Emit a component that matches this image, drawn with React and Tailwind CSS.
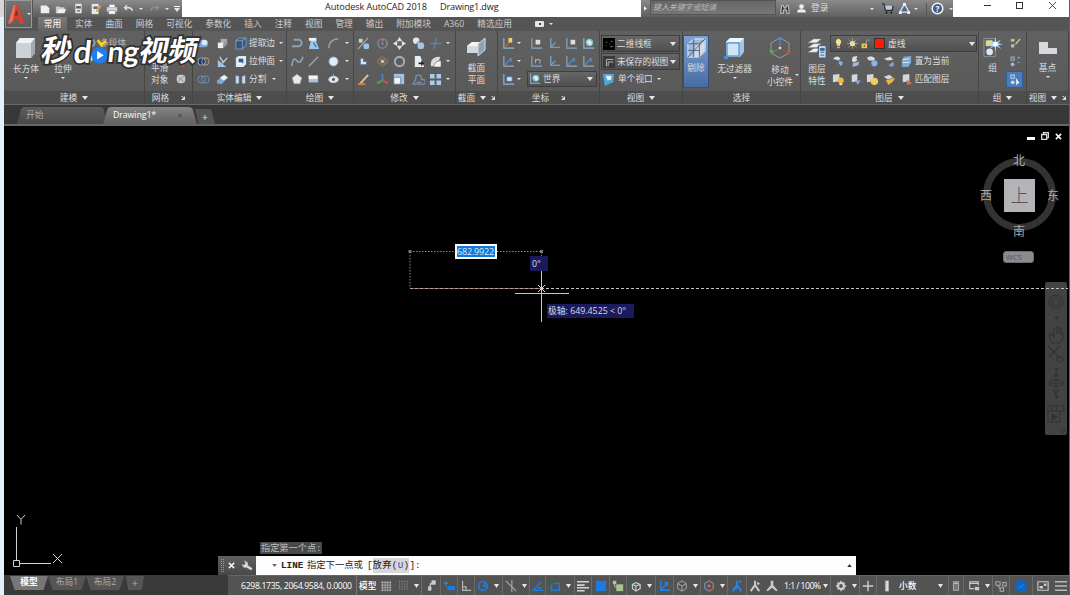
import React from "react";
import clsx from "clsx";

const B = "#8fb6dd"; // light blue used all over the ribbon glyphs

const glyphs = {
  new: <path d="M2 3h7l3 3v6H2z" fill="#eee" />,
  open: <><path d="M1 4h4l1 1h5v2H4l-2 5H1z" fill="#c9cdd2" /><path d="M4 7h9l-2 5H2z" fill="#eef1f4" /></>,
  save: <><path d="M3 1h8v12H3z" fill="#e8e8e8" /><path d="M4 4h6v3H4z" fill="#45607c" /><path d="M5 9h4v2H5z" fill="#777" /></>,
  saveAs: <><path d="M2 1h8v12H2z" fill="#e8e8e8" /><path d="M4 4h5v3H4z" fill="#55708c" /><path d="M7 9l5-7 1 2-5 7z" fill="#e5a23c" /></>,
  print: <><path d="M4 2h6v3H4z" fill="#fff" /><path d="M1 5h12v5H1z" fill="#d5d5d5" /><path d="M3 9h8v4H3z" fill="#fff" stroke="#777" strokeWidth=".7" /></>,
  undo: <path d="M5 3L2 6l3 3M2 6h6q3 0 4 4" fill="none" stroke="#e2e2e2" strokeWidth="1.8" />,
  redo: <path d="M9 3l3 3-3 3M12 6H6Q3 6 2 10" fill="none" stroke="#929292" strokeWidth="1.6" />,
  binoc: <path d="M2 12l1-9h2l1 3h2l1-3h2l1 9H9V8H5v4z" fill="#333" stroke="#eee" strokeWidth=".9" />,
  user: <><circle cx="7" cy="4.5" r="3" fill="#eee" /><path d="M1.500 12q0-4 4-4h3q4 0 4 4z" fill="#eee" /></>,
  cart: <><path d="M3 4h10l-1 5H5z" fill="#c3cbd6" /><path d="M1 2h2l2 7h7l1-5" fill="none" stroke="#26303c" strokeWidth="1.3" /><circle cx="6" cy="11.500" r="1.200" fill="#222" /><circle cx="11" cy="11.500" r="1.200" fill="#222" /></>,
  a360: <><path d="M7 2l5 9H2z" fill="#4f6c8e" stroke="#dfe8f3" strokeWidth="1.300" /><path d="M5.500 1h3v3h-3zM1 10h3v3H1zM10 10h3v3h-3z" fill="#eef3f8" /></>,
  help: <><circle cx="7" cy="7" r="5.700" fill="#3b5d8c" stroke="#f3f6fa" strokeWidth="1.600" /><text x="7" y="10.300" textAnchor="middle" fontSize="9" fontWeight="700" fill="#fff">?</text></>,
  union: <><path d="M1 3h7a4 4 0 010 8H1z" fill="#7da7d8" /><circle cx="8" cy="6" r="3" fill="#dbe9f8" /></>,
  subtract: <><circle cx="5" cy="7" r="4" fill="#23395a" stroke={B} /><circle cx="9" cy="7" r="4" fill="none" stroke="#b9a58b" /></>,
  intersect: <><circle cx="5" cy="7" r="4" fill="none" stroke="#6f93bd" /><circle cx="9" cy="7" r="4" fill="none" stroke="#6f93bd" /></>,
  boxes: <><path d="M5 2h7v6H5z" fill="#a9adb1" /><path d="M2 6h6v6H2z" fill="#eee" /><path d="M8 6l3-2v5l-3 3z" fill="#999" /></>,
  slice: <><path d="M2 5l9 8H2z" fill="#a4c3e6" /><path d="M4 2l4 6M12 3L7 9" stroke="#d7d7d7" strokeWidth="1.200" /></>,
  thicken: <><path d="M1 8l6-4 5 2-6 6-5-1z" fill="#7fa6d4" /><path d="M4 5l5-3 4 3-5 3z" fill="#e9eef3" /></>,
  cubeEdge: <path d="M2 4l4-3h7v8l-4 4H2zM2 4h7l4-3M9 4v9" fill="#3d5574" stroke="#7298c6" strokeWidth="1.100" />,
  pullFace: <><path d="M2 3l3-2h8v9l-3 3H2z" fill="#dfe9f5" /><path d="M5 4h5v5H5z" fill="#315b8f" /><path d="M4 8h5v2H4z" fill="#fff" /></>,
  split: <path d="M1 2l4 1v9H1zM13 2L9 3v9h4z" fill="#c9dcf1" stroke="#6e9aca" strokeWidth=".6" />,
  sphereMesh: <><rect x="2" y="2" width="10" height="10" rx="4" fill="#c9c9c9" /><path d="M3 10l8-7M4 5l6 5" stroke="#888" /></>,
  pline: <path d="M3 3h5a3.500 3.500 0 010 7H1" fill="none" stroke="#8ba1b8" strokeWidth="2" />,
  hatch: <><path d="M3 1h7v4l3 8H2l2-8z" fill="#9cc6ee" /><path d="M2 1h8v3H2z" fill="#eef4fa" /><path d="M7 6l3 5" stroke="#3b79bd" strokeWidth="1.500" /></>,
  arc: <path d="M2 12Q2 3 12 2" fill="none" stroke="#91a4b8" strokeWidth="1.600" />,
  spline: <path d="M1 12Q2 1 6 6t7-4" fill="none" stroke="#93a9c0" strokeWidth="1.600" />,
  line: <path d="M2 12L12 2" stroke="#93a9c0" strokeWidth="1.500" />,
  circle: <circle cx="7" cy="7" r="4.800" fill="#e4edf7" stroke={B} />,
  polygon: <path d="M7 1.500l5.500 4-2 7h-7l-2-7z" fill="#e6eaee" stroke="#9da6b0" />,
  rect: <><path d="M2 3h11v8H2z" fill="#a9c3e0" /><path d="M2 3h10v4H2z" fill="#f0f4f8" /></>,
  ellipse: <><ellipse cx="7" cy="7" rx="5.500" ry="3.800" fill="#dce5ee" /><circle cx="7" cy="7" r="1.600" fill="#555" /><path d="M7 1v3" stroke={B} /></>,
  move: <><path d="M1 13L12 1" stroke="#aaa" strokeWidth="1.300" /><path d="M2 2h4v4H2z" fill="#ccd2d8" /><rect x="7" y="7" width="6" height="6" rx="2" fill="#9dc3ec" /></>,
  rotate: <><circle cx="7" cy="7" r="5" fill="none" stroke="#828b95" strokeWidth="1.500" /><path d="M7 2v3M11 6l2 2" stroke="#c96b5a" strokeWidth="1.700" /><circle cx="7" cy="7" r="1" fill="#79a1d0" /></>,
  pan4: <path d="M7 0l3 4.500H4zM7 14l3-4.500H4zM0 7l4.500-3v6zM14 7L9.500 4v6z" fill="#dce2e8" />,
  copy: <><circle cx="4.500" cy="4" r="3.500" fill="#e2e6ea" /><rect x="6" y="6" width="7" height="7" rx="2.500" fill="#9fc5ec" /><path d="M4 8l4-4" stroke="#777" /></>,
  trim: <path d="M1 7h12M8 1L5 13" stroke="#66809b" strokeWidth="1.600" />,
  stretch: <><path d="M3 3v8h8V7H7V3z" fill="#d5e2f0" stroke="#4f6f96" /></>,
  rotate3d: <><ellipse cx="7" cy="7" rx="5.500" ry="3" fill="none" stroke="#b35b4e" strokeWidth="1.500" /><ellipse cx="7" cy="7" rx="2.500" ry="5.500" fill="none" stroke="#6a8a6c" strokeWidth="1" /><circle cx="7" cy="7" r="1.600" fill="#ddd" /></>,
  ring: <circle cx="7" cy="7" r="5" fill="none" stroke="#a3acb6" strokeWidth="2.200" />,
  mirror: <><path d="M3 1h6l4 12H3z" fill="#e6edf4" /><path d="M7 8h3v-2l3 3-3 3v-2H7z" fill="#222" /></>,
  fillet: <><path d="M2 12V8q1-6 10-6l-1 4q-4 1-4 6z" fill="#d9dde1" /><path d="M5 13q1-7 8-7v7z" fill="#f1f2f3" stroke="#555" strokeWidth=".6" /></>,
  erase: <><path d="M3 12l9-10" stroke="#ddbf93" strokeWidth="2.200" /><path d="M1 12h8" stroke="#d58036" strokeWidth="2" /></>,
  gizmo: <><path d="M7 8V1" stroke="#4b81c4" strokeWidth="2" /><path d="M7 8l-6 3" stroke="#4d9e58" strokeWidth="2.300" /><path d="M7 8l6 3" stroke="#bf5347" strokeWidth="2.300" /></>,
  scale: <><path d="M1 1h12v12H1z" fill="#9ec2e9" /><path d="M1 5h8v8H1z" fill="#f1f5f8" stroke="#5b738c" strokeWidth=".9" /></>,
  offset: <path d="M1 12h11a2 2 0 000-5h-2V5a3 3 0 00-6 0v2zM5 10h5" fill="none" stroke="#7791ad" strokeWidth="1.400" />,
  array: <path d="M1 1h5v5H1zM8 1h5v5H8zM1 8h5v5H1zM8 8h5v5H8z" fill="#a6caf0" />,
  ucs: <path d="M3 1v10h10M3 11l5-5" fill="none" stroke="#86a8cd" strokeWidth="1.200" />,
  ucsGold: <><path d="M2 1v11h11" fill="none" stroke="#8fb6dd" strokeWidth="1.200" /><path d="M4 10l5-6" stroke="#d6653a" strokeWidth="1.300" /><path d="M7 1h4v5H7z" fill="#f6d060" /></>,
  ucsBox: <><path d="M2 1v11h11" fill="none" stroke="#86a8cd" strokeWidth="1.200" /><path d="M6 3h5v5H6z" fill="#ddd" /></>,
  ucsBack: <><path d="M2 1v11h11" fill="none" stroke="#86a8cd" strokeWidth="1.200" /><path d="M6 9V5h4q2 1 0 4" fill="none" stroke="#aaa" strokeWidth="1.200" /></>,
  ucsBlue: <><path d="M2 1v11h11" fill="none" stroke="#9ab" strokeWidth="1.200" /><path d="M3 11l7-8M10 3v4" fill="none" stroke="#5286c4" strokeWidth="1.700" /></>,
  ucsWorld: <><path d="M2 1v11h11" fill="none" stroke="#8fb6dd" strokeWidth="1.200" /><circle cx="8" cy="6" r="4" fill="#7cc3cf" /><path d="M5 5q3-3 5 0t-2 4" fill="#d9eef1" /></>,
  ucsView: <><path d="M2 1v11h11" fill="none" stroke="#8fb6dd" strokeWidth="1.200" /><path d="M5 4h6v5H5z" fill="#cfe2f8" stroke="#3f72b0" /></>,
  visual: <><path d="M0 0h14v14H0z" fill="#000" /><path d="M3 5h2M9 4h2M3 9h1M8 10h4M7 7h1" stroke="#777" /></>,
  named: <><path d="M0 0h14v14H0z" fill="#3a3a3a" /><path d="M4 12V4h8M6 7h6M6 7v5" fill="none" stroke="#bbb" strokeWidth="1.100" /></>,
  viewport: <><path d="M1 1h12l-1 9-9 4z" fill="#4fa6d8" /><path d="M4 3h6v4l-4 1z" fill="#dff1fa" /></>,
  bulb: <><path d="M7 1a4 4 0 00-2 7v2h4V8a4 4 0 00-2-7" fill="#f6e391" /><path d="M5 11h4v2H5z" fill="#aaa" /></>,
  sun: <><circle cx="7" cy="7" r="3.300" fill="#f8edc0" /><path d="M7 0v14M0 7h14M2 2l10 10M12 2L2 12" stroke="#d8c890" strokeWidth=".7" /></>,
  unlock: <><path d="M2 7h7v6H2z" fill="#efc64d" /><path d="M8 7V3q3-2 4 1" fill="none" stroke="#999" strokeWidth="1.200" /><circle cx="5.500" cy="10" r="1" fill="#444" /></>,
  lay1: <><path d="M1 4q5-5 8 0l-2 2z" fill="#d7dce1" /><path d="M8 6l4 2-2 4-3-3z" fill="#7fb0e6" /></>,
  lay2: <><path d="M4 2l5-1-1 3 1 2-4 2-2-2z" fill="#d7dce1" /><path d="M4 9l7-2-1 4-6 2z" fill="#9eb9d6" /></>,
  lay3: <><path d="M1 3q5-4 9 1L8 6H3z" fill="#d7dce1" /><circle cx="9" cy="9" r="3.300" fill="#88b5e7" /></>,
  lay4: <><path d="M1 4l7-2 3 3-6 1z" fill="#d7dce1" /><path d="M6 11l5-4 1 4-3 2z" fill="#7da2cc" /></>,
  lay5: <><path d="M4 2l8-1v7l-3 5H2V6z" fill="#7ea7d5" /><path d="M3 5l7-1M3 8h7" stroke="#e8f0f8" /></>,
  layBulb: <><path d="M1 2l7-1v8l-7 1z" fill="#d4d8dc" /><circle cx="9.500" cy="8" r="3.200" fill="#f3b44a" /><path d="M8 11h3v2H8z" fill="#eee" /></>,
  layBlue: <><path d="M3 2l6-1v8l-6 1z" fill="#d4d8dc" /><path d="M7 8h6l-4 5z" fill="#7da9dc" /></>,
  laySun: <><path d="M1 2l7-1v8l-7 1z" fill="#d4d8dc" /><circle cx="9" cy="9" r="4" fill="#f2cf5b" /></>,
  layLock: <><path d="M1 4l6-2 4 3-6 2z" fill="#d4d8dc" /><path d="M3 8l10-3-2 4-5 4z" fill="#e8b545" /></>,
  layMatch: <><path d="M3 2l7-1v8l-7 1z" fill="#d4d8dc" /><path d="M7 7l6 4-5 2z" fill="#e0723d" /></>,
  grpEdit: <><path d="M3 2h4v3H3z" fill="#c9bc75" /><circle cx="5" cy="9.500" r="2" fill="#bbb" /><path d="M8 8l5-6" stroke="#dccb7d" strokeWidth="1.500" /></>,
  grpAdd: <><path d="M3 2h4v4H3z" fill="#6d7f92" stroke="#a5b3c0" strokeWidth=".8" /><circle cx="5" cy="10" r="2" fill="#a9b6c4" /><path d="M10 3h3M10 8h3M11.500 1.500v3" stroke="#8c9dae" /></>,
  grpSel: <><path d="M3 2h4v4H3z" fill="#6b92c4" stroke="#c8dcf4" strokeWidth=".8" /><circle cx="5" cy="10" r="2" fill="#c7dcf4" /><path d="M9 6l3 5-2 0-1 2z" fill="#fff" stroke="#e8f1fb" strokeWidth=".6" /></>,

  // status bar
  sGrid: <path d="M3 1v12M6 1v12M9 1v12M12 1v12M1 3h12M1 6h12M1 9h12M1 12h12" stroke="#b5b5b5" strokeWidth=".9" />,
  sSnap: <path d="M3 1v12M6 1v12M9 1v12M12 1v12" stroke="#8a8a8a" strokeWidth="1.200" strokeDasharray="1.500 1.500" />,
  sInfer: <path d="M8 1h4v4H8zM8 4H6v5M4 8h3v4H4z" fill="#ccc" stroke="#ccc" />,
  sDyn: <><path d="M1 4h5M3.500 1v6" stroke="#2a86e0" strokeWidth="1.400" /><rect x="5" y="7" width="9" height="5" rx="1" fill="#1d7be0" /></>,
  sOrtho: <path d="M3 1v11h10M3 8h4v4" fill="none" stroke="#b4b4b4" strokeWidth="1.400" />,
  sPolar: <><circle cx="7" cy="7" r="5" fill="none" stroke="#1d7be0" strokeWidth="2" /><path d="M7 7h6M7 7l4-5" stroke="#1d7be0" strokeWidth="1.500" /></>,
  sIso: <path d="M1 1l12 12M8 0v14" stroke="#aaa" strokeWidth="1.300" />,
  sTrack: <path d="M1 12L11 2M1 12h12M7 9h4" fill="none" stroke="#1d7be0" strokeWidth="1.800" />,
  sOsnap: <><path d="M3 4h9v8H3z" fill="none" stroke="#1d7be0" strokeWidth="1.800" /><path d="M1 1h4v4H1z" fill="#237536" /></>,
  sWeight: <path d="M0 2h14M0 6h9M0 9h14M0 12.500h9" stroke="#d5d5d5" strokeWidth="1.800" />,
  sTrans: <path d="M1 1h12v12H1z" fill="#1d7be0" />,
  sCycle: <><path d="M5 5h8v8H5z" fill="#a7c48c" /><path d="M1 1h4v4H1z" fill="#bbb" /><path d="M3 5v3h3" fill="none" stroke="#bbb" /></>,
  s3d: <><path d="M4 5l4-2 5 2v5l-5 3-4-3zM4 5l4 2 5-2M8 7v6" fill="none" stroke="#ccc" strokeWidth="1.400" /><path d="M0 1h4v4H0z" fill="#237536" /></>,
  sDucs: <path d="M2 1v11h11M3 11l7-8M10 3v4M6 3h4" fill="none" stroke="#2384e8" strokeWidth="1.600" />,
  sCube: <path d="M2 4l5-3 5 3v6l-5 3-5-3zM2 4l5 3 5-3M7 7v6" fill="none" stroke="#aaa" strokeWidth="1.100" />,
  sGizmo: <><path d="M7 1l5 3v6l-5 3-5-3V4z" fill="none" stroke="#aaa" /><path d="M12 5v5l-4 3" fill="none" stroke="#c55f4c" strokeWidth="1.200" /><path d="M2 5v5l4 3" fill="none" stroke="#4e88cc" /><circle cx="7" cy="7" r="1.700" fill="#d66" /></>,
  sAnnoB: <path d="M7 1v5l-5 7M7 6l5 7M3 10h4M9 2h3" fill="none" stroke="#2384e8" strokeWidth="2.300" />,
  sAnno: <><path d="M7 1v5l-5 7M7 6l5 7" fill="none" stroke="#ccc" strokeWidth="2.200" /><path d="M9 2l4 2-3 2z" fill="#ccc" /></>,
  sAnnoS: <path d="M5.500 1h3v5l5 6-1.500 1-5-4-5 4L.5 12l5-6z" fill="#ccc" />,
  sGear: <><circle cx="7" cy="7" r="3.400" fill="none" stroke="#d5d5d5" strokeWidth="2.400" /><path d="M7 1v2M7 11v2M1 7h2M11 7h2M3 3l1 1M10 10l1 1M11 3l-1 1M4 10l-1 1" stroke="#d5d5d5" strokeWidth="1.600" /></>,
  sPlus: <path d="M7 1v12M1 7h12" stroke="#d0d0d0" strokeWidth="1.600" />,
  sUnit: <path d="M5 1h4v12H5zM5 4h2M5 7h2M5 10h2" fill="#ddd" stroke="#999" strokeWidth=".5" />,
  sCalc: <><path d="M4 2h6v10H4z" fill="#777" stroke="#aaa" strokeWidth="1.200" /><path d="M5 4h4" stroke="#ddd" /></>,
  sLock: <><path d="M12 6V2H2v8h5M2 4h10" fill="none" stroke="#ccc" strokeWidth="1.300" /><path d="M8 8h5v4H8z" fill="#ccc" /></>,
  sIsolate: <path d="M1 2h5v4H1zM9 3h4v4H9zM6 9h4v4H6zM3 6l3 4" fill="none" stroke="#aaa" strokeWidth="1.200" />,
  sClean: <><circle cx="7" cy="7" r="7" fill="#0c67c8" /><path d="M5 9q4-1 5-4" stroke="#2d8cf0" fill="none" /></>,
  sFull: <><path d="M1 2h12v10H1z" fill="none" stroke="#ccc" strokeWidth="1.300" /><path d="M3 7h4v3H3zM8 4h3v3H8z" fill="#ccc" /></>,
  sMenu: <path d="M0 2h14M0 7h14M0 12h14" stroke="#bbb" strokeWidth="1.700" />,
};

function Icon({ name, className = "size-[13px]" }) {
  return (
    <svg viewBox="0 0 14 14" className={clsx("block shrink-0", className)}>
      {glyphs[name]}
    </svg>
  );
}

function Caret({ big, className }) {
  return (
    <svg viewBox="0 0 6 4" preserveAspectRatio="none" className={clsx("block shrink-0", className || (big ? "h-[4px] w-[6px]" : "h-[2px] w-[4px]"))}>
      <path d="M0 0h6L3 4z" fill="#e6e6e6" />
    </svg>
  );
}

function Panel({ title, className, children, more = true, launcher }) {
  return (
    <section className={clsx("flex shrink-0 flex-col border-r border-[#464646]", className)}>
      <div className="flex h-[60px] pt-[3px]">{children}</div>
      <div className="flex h-[13px] items-center justify-center gap-[5px] bg-[#4d4d4d] whitespace-nowrap">
        <span>{title}</span>
        {more && <Caret big />}
        {launcher && (
          <svg viewBox="0 0 5 5" className={clsx("size-[4px] shrink-0", !more && "ml-[7px]")}>
            <path d="M5 0v5H0zM0 0h2l2 3z" fill="#ddd" />
          </svg>
        )}
      </div>
    </section>
  );
}

function Combo({ icon, children, className }) {
  return (
    <div className={clsx("flex items-center border border-[#3e3e3e] bg-linear-to-b from-[#666] to-[#505050] px-px", className)}>
      {icon && <Icon name={icon} className="size-[12px]" />}
      <span className="w-[20px] grow pl-[2px] whitespace-nowrap">{children}</span>
      <Caret big className="mr-[2px] h-[4px] w-[6px]" />
    </div>
  );
}

const menuTabs = ["实体", "曲面", "网格", "可视化", "参数化", "插入", "注释", "视图", "管理", "输出", "附加模块", "A360", "精选应用"];

function TitleBar() {
  return (
    <header className="flex h-[17px]">
      <div className="flex w-[149px] items-center bg-linear-to-b from-[#8a8a8a] to-[#5e5e5e] pl-[4px]">
        <Icon name="new" className="ml-[2px] size-[12px]" />
        <Icon name="open" className="ml-[4px] size-[12px]" />
        <Icon name="save" className="ml-[6px] size-[11px]" />
        <Icon name="saveAs" className="ml-[6px] size-[12px]" />
        <Icon name="print" className="ml-[4px] size-[12px]" />
        <Icon name="undo" className="ml-[5px] size-[11px]" />
        <Caret className="ml-[5px] h-[2px] w-[4px]" />
        <Icon name="redo" className="ml-[6px] size-[11px]" />
        <Caret className="ml-[5px] h-[2px] w-[4px]" />
        <div className="ml-[5px] flex flex-col items-center gap-px">
          <span className="h-px w-[6px] bg-white" />
          <Caret big />
        </div>
      </div>
      <div className="flex w-[459px] bg-white pl-[143px] text-[9.1px] leading-[13px] text-[#222]">
        <span className="w-[115px] tracking-[-0.080px] whitespace-nowrap">Autodesk AutoCAD 2018</span>
        <span className="tracking-[-0.160px] whitespace-nowrap">Drawing1.dwg</span>
      </div>
      <div className="flex w-[312px] items-center bg-linear-to-b from-[#8a8a8a] to-[#606060]">
        <div className="flex w-[9px] justify-center">
          <svg viewBox="0 0 4 6" className="h-[5px] w-[3px]">
            <path d="M0 0l4 3-4 3z" fill="#eee" />
          </svg>
        </div>
        <div className="h-[15px] w-[126px] self-start border border-[#555] bg-linear-to-b from-[#666] to-[#777] pl-[2px] text-[7.900px] leading-[13px] text-[#bbb] italic">
          键入关键字或短语
        </div>
        <Icon name="binoc" className="ml-[3px] size-[12px]" />
        <Icon name="user" className="ml-[5px] size-[11px]" />
        <span className="ml-[4px] w-[18px] whitespace-nowrap">登录</span>
        <Caret className="ml-[41px] h-[2px] w-[4px]" />
        <Icon name="cart" className="ml-[7px] size-[13px]" />
        <Icon name="a360" className="ml-[4px] size-[13px]" />
        <Caret className="ml-[3px] h-[2px] w-[4px]" />
        <span className="ml-[8px] h-[12px] w-px bg-[#555]" />
        <Icon name="help" className="ml-[4px] size-[13px]" />
        <Caret className="ml-[5px] h-[2px] w-[4px]" />
      </div>
      <div className="flex grow bg-white pt-[2px] pl-[31px]">
        <span className="mt-[3px] h-px w-[7px] bg-[#333]" />
        <span className="ml-[25px] size-[7px] border border-[#333]" />
        <svg viewBox="0 0 8 8" className="ml-[26px] size-[7px]">
          <path d="M0 0l8 8M8 0L0 8" stroke="#333" />
        </svg>
      </div>
    </header>
  );
}

function MenuTabs() {
  return (
    <nav className="flex h-[14px] items-center gap-[13px] bg-[#555] pl-[5px] whitespace-nowrap text-[#ccc]">
      <span className="-mr-[5px] flex h-[14px] w-[29px] items-center justify-center bg-linear-to-b from-[#7a7a7a] to-[#646464] pt-[2px] text-white">常用</span>
      {menuTabs.map((t) => (
        <span key={t} className="pt-[2px]">{t}</span>
      ))}
      <span className="ml-[10px] flex items-center gap-[5px]">
        <span className="flex h-[6px] w-[9px] items-center justify-center rounded-[1px] bg-[#e5e5e5]">
          <span className="size-[2px] bg-[#444]" />
        </span>
        <Caret />
      </span>
    </nav>
  );
}

function Ribbon() {
  return (
    <div className="flex h-[73px] bg-linear-to-b from-[#616161] to-[#585858] leading-[12px]">
      <Panel title="建模" className="w-[141px]">
        <div className="flex w-[44px] flex-col items-center">
          <svg viewBox="0 0 22 24" className="mt-[2px] h-[24px] w-[22px]">
            <path d="M1 7l4-5h15v15l-4 5H1z" fill="#cdd2d6" />
            <path d="M1 7l4-5h15l-4 5z" fill="#f0f2f4" />
            <path d="M16 7l4-5v15l-4 5z" fill="#a3a9af" />
          </svg>
          <span className="mt-[3px]">长方体</span>
          <Caret className="mt-[2px] h-[2px] w-[4px]" />
        </div>
        <div className="flex w-[30px] flex-col items-center">
          <span className="mt-[29px]">拉伸</span>
          <Caret className="mt-[2px] h-[2px] w-[4px]" />
        </div>
        <div className="flex flex-col pl-[6px]">
          <div className="flex h-[18px] items-center gap-[3px] text-[#bbb]">
            <Icon name="pline" />
            <span>多段体</span>
          </div>
          <Icon name="thicken" className="mt-px -ml-[2px] size-[14px]" />
        </div>
      </Panel>

      <Panel title="网格" className="w-[48px]" more={false} launcher>
        <div className="w-[28px] pt-[28px] pl-[6px]">平滑<br />对象</div>
        <div className="flex flex-col items-center pl-[2px]">
          <span className="mt-[30px] h-[3px] w-[5px] bg-[#b74c3e]" />
          <Icon name="sphereMesh" className="mt-[6px] size-[12px]" />
        </div>
      </Panel>

      <Panel title="实体编辑" className="w-[94px]">
        <div className="grid h-[54px] grid-cols-[20px_18px_18px_26px_11px] grid-rows-3 place-items-center whitespace-nowrap">
          <Icon name="union" /><Icon name="boxes" /><Icon name="cubeEdge" /><span>提取边</span><Caret />
          <Icon name="subtract" /><Icon name="slice" /><Icon name="pullFace" /><span>拉伸面</span><Caret />
          <Icon name="intersect" /><Icon name="thicken" /><Icon name="split" className="size-[11px]" /><span className="justify-self-start">分割</span><Caret className="h-[2px] w-[4px] -translate-x-[7px]" />
        </div>
      </Panel>

      <Panel title="绘图" className="w-[67px]">
        <div className="grid h-[54px] grid-cols-[16px_16px_25px_2px] grid-rows-3 place-items-center pl-[2px]">
          <Icon name="pline" /><Icon name="hatch" /><Icon name="arc" /><Caret />
          <Icon name="spline" /><Icon name="line" /><Icon name="circle" /><Caret />
          <Icon name="polygon" className="size-[12px]" /><Icon name="rect" className="size-[12px]" /><Icon name="ellipse" /><Caret />
        </div>
      </Panel>

      <Panel title="修改" className="w-[102px]">
        <div className="grid h-[54px] grid-cols-[18px_20px_14px_24px_10px_15px] grid-rows-3 place-items-center">
          <Icon name="move" /><Icon name="rotate" /><Icon name="pan4" /><Icon name="copy" /><Icon name="trim" /><Caret />
          <Icon name="stretch" className="size-[11px]" /><Icon name="rotate3d" /><Icon name="ring" /><Icon name="mirror" /><Icon name="fillet" /><Caret />
          <Icon name="erase" /><Icon name="gizmo" /><Icon name="scale" className="size-[12px]" /><Icon name="offset" /><Icon name="array" /><Caret />
        </div>
      </Panel>

      <Panel title="截面" className="w-[42px]" launcher>
        <div className="flex w-full flex-col items-center">
          <svg viewBox="0 0 22 20" className="mt-[3px] h-[20px] w-[22px]">
            <path d="M1 9l5-4h10v7l-4 4H1z" fill="#d4d8dc" />
            <path d="M1 9l5-4h10l-4 4z" fill="#f2f4f6" />
            <path d="M12 7l7-6v12l-7 6z" fill="#8fa2b5" stroke="#d5dde5" />
          </svg>
          <span className="mt-[5px]">截面</span>
          <span>平面</span>
        </div>
      </Panel>

      <Panel title="坐标" className="w-[102px]" more={false} launcher>
        <div className="grid h-[54px] grid-cols-[20px_2px_7px_18px_18px_17px_17px] grid-rows-3 place-items-center">
          <Icon name="ucsGold" /><Caret /><i /><Icon name="ucsBox" /><Icon name="ucs" /><Icon name="ucsBox" /><Icon name="ucsWorld" />
          <Icon name="ucsBlue" /><Caret /><i /><Icon name="ucsBack" /><Icon name="ucs" /><Icon name="ucsBlue" /><Icon name="ucsBlue" />
          <Icon name="ucsView" /><Caret /><i />
          <Combo icon="ucsWorld" className="col-span-4 h-[16px] w-[70px]">世界</Combo>
        </div>
      </Panel>

      <Panel title="视图" className="w-[83px]">
        <div className="flex flex-col pl-px">
          <Combo icon="visual" className="mt-px h-[17px] w-[79px]">二维线框</Combo>
          <Combo icon="named" className="mt-px h-[17px] w-[79px] tracking-[-0.200px]">未保存的视图</Combo>
          <div className="flex h-[18px] items-center gap-[3px] pl-px">
            <Icon name="viewport" />
            <span>单个视口</span>
            <Caret className="ml-px h-[2px] w-[4px]" />
          </div>
        </div>
      </Panel>

      <Panel title="选择" className="w-[118px]" more={false}>
        <div className="mt-px flex h-[53px] w-[26px] flex-col items-center border border-[#33547f] bg-linear-to-b from-[#7d9fd0] to-[#476ca5]">
          <svg viewBox="0 0 22 24" className="mt-px h-[23px] w-[21px]">
            <path d="M2 7l6-5h12v13l-6 6H2z" fill="#9fb9dc" stroke="#e7eef7" />
            <path d="M10 10l9-7v12l-6 6H8z" fill="#d5dade" />
            <path d="M2 7h12v14M14 7l6-5M2 14h12M8 2v19M2 21L20 2" fill="none" stroke="#4b6387" />
          </svg>
          <span className="mt-[2px]">剔除</span>
        </div>
        <div className="flex w-[50px] flex-col items-center pl-px">
          <svg viewBox="0 0 22 24" className="mt-[2px] h-[24px] w-[22px]">
            <path d="M2 6l4-4h14v14l-4 5H2z" fill="#9dc6ef" />
            <path d="M2 6l4-4h14l-4 4z" fill="#eef5fb" />
            <path d="M3 7h12v13H3z" fill="#cfe4f7" stroke="#4e7fb5" />
            <path d="M0 20h4v3H0z" fill="#4f8fd0" />
          </svg>
          <span className="mt-[3px] whitespace-nowrap">无过滤器</span>
          <Caret className="mt-[2px] h-[2px] w-[4px]" />
        </div>
        <div className="flex w-[40px] items-start">
          <div className="flex w-[40px] shrink-0 flex-col items-center pl-[2px]">
            <svg viewBox="0 0 24 24" className="mt-[2px] size-[24px]">
              <path d="M12 2l9 5v10l-9 5-9-5V7z" fill="none" stroke="#9a9a9a" />
              <path d="M12 12V4" stroke="#4f83cb" strokeWidth="1.500" />
              <path d="M10 1h4v3h-4z" fill="#4f83cb" />
              <path d="M12 12l-8 5" stroke="#539a51" />
              <path d="M1 14h5l-2 4z" fill="#5ba65a" />
              <path d="M12 12l8 5" stroke="#b5493d" />
              <path d="M18 15h5l-2 4z" fill="#d14a3d" />
              <circle cx="12" cy="12" r="2" fill="#ddd" stroke="#555" />
            </svg>
            <span className="mt-[4px]">移动</span>
            <span className="whitespace-nowrap">小控件</span>
          </div>
          <Caret className="mt-[40px] -ml-[4px] h-[2px] w-[4px]" />
        </div>
      </Panel>

      <Panel title="图层" className="w-[178px]">
        <div className="flex w-[29px] flex-col items-center pl-[3px]">
          <svg viewBox="0 0 22 24" className="mt-[2px] h-[23px] w-[21px]">
            <path d="M1 7l6-4h8l-5 4zM1 12l6-4h8l-5 4zM1 17l6-4h6l-3 4z" fill="#eee" stroke="#888" strokeWidth=".5" />
            <path d="M12 10h8v13h-8z" fill="#c4d8ed" stroke="#3f5a78" />
            <path d="M14 13h4v2h-4zM14 17h4M14 20h4" fill="#41668e" stroke="#41668e" />
          </svg>
          <span className="mt-[4px]">图层</span>
          <span>特性</span>
        </div>
        <div className="flex flex-col">
          <div className="mt-px flex h-[17px] w-[147px] items-center border border-[#3e3e3e] bg-linear-to-b from-[#666] to-[#505050] pl-[2px]">
            <Icon name="bulb" className="size-[11px]" />
            <Icon name="sun" className="ml-[3px] size-[11px]" />
            <Icon name="unlock" className="ml-[2px] size-[11px]" />
            <span className="ml-[3px] size-[11px] border border-[#333] bg-[#ff1c00]" />
            <span className="ml-[3px] grow">虚线</span>
            <Caret big className="mr-px h-[4px] w-[6px]" />
          </div>
          <div className="grid h-[36px] grid-cols-[17px_17px_17px_17px_16px_36px] grid-rows-2 place-items-center whitespace-nowrap">
            <Icon name="lay1" /><Icon name="lay2" /><Icon name="lay3" /><Icon name="lay4" /><Icon name="lay5" /><span>置为当前</span>
            <Icon name="layBulb" /><Icon name="layBlue" /><Icon name="laySun" /><Icon name="layLock" /><Icon name="layMatch" /><span>匹配图层</span>
          </div>
        </div>
      </Panel>

      <Panel title="组" className="w-[48px]">
        <div className="flex w-[27px] flex-col items-center">
          <svg viewBox="0 0 22 24" className="mt-[2px] h-[24px] w-[21px]">
            <path d="M2 2h12v19H2z" fill="none" stroke="#8c9399" />
            <path d="M4 4h7v6H4z" fill="#e7d987" />
            <circle cx="8" cy="16" r="3.500" fill="#dce8f2" />
            <path d="M14 0l1 6 5-3-3 4 5 1-5 1 3 4-5-3-1 6-1-6-5 3 3-4-5-1 5-1-3-4 5 3z" fill="#a9d6fb" />
            <circle cx="14" cy="8" r="2.500" fill="#fff" />
          </svg>
          <span className="mt-[2px]">组</span>
        </div>
        <div className="flex flex-col">
          <span className="flex h-[18px] items-center justify-center"><Icon name="grpEdit" /></span>
          <span className="flex h-[18px] items-center justify-center"><Icon name="grpAdd" /></span>
          <span className="mt-px flex h-[17px] w-[17px] items-center justify-center border border-[#2f5d96] bg-[#4a7dbd]"><Icon name="grpSel" /></span>
        </div>
      </Panel>

      <Panel title="视图" className="w-[42px]" launcher>
        <div className="flex w-full flex-col items-center">
          <svg viewBox="0 0 18 14" className="mt-[7px] h-[14px] w-[18px]">
            <path d="M0 1h9v6h9v6H0z" fill="#d6dadd" />
          </svg>
          <span className="mt-[7px]">基点</span>
          <Caret className="mt-[2px] h-[2px] w-[4px]" />
        </div>
      </Panel>
    </div>
  );
}

function FileTabs() {
  return (
    <div className="flex h-[22px] items-end border-t border-b-2 border-t-[#686868] border-b-[#666] bg-[#383838] pl-[13px] text-[8.8px]">
      <div className="flex h-[17px] w-[90px] items-center bg-linear-to-b from-[#5d5d5d] to-[#484848] pt-px pl-[9px] text-[#aaa] [clip-path:polygon(0_100%,5%_8%,8%_0,93%_0,96%_8%,100%_100%)]">
        开始
      </div>
      <div className="-ml-[4px] flex h-[17px] w-[94px] items-center bg-linear-to-b from-[#858585] to-[#606060] pt-px pl-[10px] text-white [clip-path:polygon(0_100%,5%_8%,8%_0,92%_0,95%_8%,100%_100%)]">
        <span className="w-[64px] tracking-[-0.100px]">Drawing1*</span>
        <span className="text-[7px] text-[#444]">✕</span>
      </div>
      <div className="-ml-[2px] flex h-[15px] w-[20px] items-center justify-center bg-[#555] [clip-path:polygon(0_0,80%_0,100%_100%,18%_100%)]">
        <span className="text-[11px] leading-[13px] text-[#ddd]">+</span>
      </div>
    </div>
  );
}

function NavBar() {
  return (
    <div className="absolute top-[156px] left-[1041px] h-[153px] w-[22px] rounded-[2px] bg-[#434343]">
      <svg viewBox="0 0 22 153" className="h-[153px] w-[22px]" fill="none" stroke="#333" strokeWidth="1.100">
        <circle cx="11" cy="20" r="7" />
        <circle cx="11" cy="20" r="4" />
        <path d="M10 35h3l-1.500 2z" fill="#333" />
        <path d="M5 52q-2 6 3 9h6q4-2 4-9l-2-3v5-7l-2-1v6-7h-2v7-6H9v9l-3-4z" />
        <path d="M3 64l12 12M15 64L4 75" />
        <circle cx="15" cy="77" r="3" />
        <path d="M10 87h3l-1.500 2zM10 114h3l-1.500 2z" fill="#333" />
        <path d="M11 92v19M4 101h15M8 95l3-4 3 4M8 108l3 4 3-4" />
        <ellipse cx="11" cy="101" rx="7" ry="3" />
        <path d="M3 124h16v5H3zM3 129h12v11H3zM7 124v5M12 124v5" />
        <path d="M7 132l5 3-5 3z" fill="#333" />
        <circle cx="18" cy="149" r="1.500" />
      </svg>
    </div>
  );
}

function Canvas() {
  return (
    <main className="relative h-[449px] overflow-hidden bg-black">
      <NavBar />

      <svg className="absolute inset-0 h-[449px] w-[1065px]" viewBox="4 126 1065 449" fill="none">
        <path d="M410 251.500h131M410 252v36M541.500 252v8" stroke="#8a8a8a" strokeDasharray="1.500 1.500" />
        <path d="M410 288.500h131" stroke="#8e5a54" />
        <path d="M410 288.500h131" stroke="#b5a5a3" strokeDasharray="3 2" />
        <path d="M541 288.500h527" stroke="#c4c4c4" strokeDasharray="3 2" />
        <path d="M408.500 250h3v3h-3zM540 250h3v3h-3z" fill="#777" />
        <path d="M515 293.500h54M541.500 271v51" stroke="#c9c9b8" />
        <path d="M538 285l7 7M545 285l-7 7" stroke="#ddd" />
        <path d="M16.500 527v33M19 563.500h32M13.500 560.500h6v6h-6z" stroke="#cfcfcf" />
        <path d="M17 515l4 4.500 4-4.500M21 519.500v5M53 554l9 9M62 554l-9 9" stroke="#cfcfcf" />
      </svg>

      <div className="absolute top-[118px] left-[451px] h-[15px] w-[42px] bg-white p-[2px]">
        <div className="h-[11px] w-[38px] bg-[#1478d4] text-[9px] leading-[12px] tracking-[-0.180px] text-[#d8ecff]">682.9922</div>
      </div>
      <div className="absolute top-[130px] left-[526px] h-[15px] w-[18px] bg-[#1a1a5c] pl-[2px] text-[8.8px] leading-[16px]">0°</div>
      <div className="absolute top-[178px] left-[543px] h-[14px] w-[87px] bg-[#1a1a5c] pl-px text-[8.8px] leading-[14px] whitespace-nowrap">
        极轴: 649.4525 &lt; 0°
      </div>

      <div className="absolute top-[6px] left-[1023px] flex items-center gap-[6px]">
        <span className="mt-[5px] h-[3px] w-[8px] bg-white" />
        <svg viewBox="0 0 8 8" className="size-[8px]" fill="none" stroke="#ddd" strokeWidth="1.300">
          <path d="M2.500 2V.7h5v5H6M.7 2.500h5v5h-5z" />
        </svg>
        <svg viewBox="0 0 8 8" className="size-[7px]" stroke="#eee" strokeWidth="2">
          <path d="M1 1l6 6M7 1L1 7" />
        </svg>
      </div>

      {/* view cube */}
      <div className="absolute top-[32px] left-[979px] size-[73px] rounded-full border-[7px] border-[#333]" />
      <div className="absolute top-[53px] left-[1000px] flex h-[33px] w-[31px] items-center justify-center bg-[#b4b4b8] text-[18px] font-light text-[#555]">上</div>
      <span className="absolute top-[28px] left-[1009px] text-[12px] leading-[14px] text-[#aaa]">北</span>
      <span className="absolute top-[99px] left-[1009px] text-[12px] leading-[14px] text-[#aaa]">南</span>
      <span className="absolute top-[63px] left-[976px] text-[12px] leading-[14px] text-[#aaa]">西</span>
      <span className="absolute top-[63px] left-[1043px] text-[12px] leading-[14px] text-[#aaa]">东</span>
      <div className="absolute top-[125px] left-[999px] h-[12px] w-[31px] rounded-[3px] border border-[#6c6c70] bg-[#8b8b91] pl-[2px] text-[7.500px] leading-[11px] text-[#55555c]">WCS</div>

      {/* command line */}
      <div className="absolute top-[416px] left-[256px] h-[12px] w-[62px] bg-[#4a4a4a] pl-px font-['Liberation_Mono','Noto_Sans_CJK_SC',monospace] text-[9.200px] leading-[13px] whitespace-nowrap text-[#bdbdbd]">指定第一个点:</div>
      <div className="absolute top-[430px] left-[214px] flex h-[19px] w-[638px] items-center bg-[#fdfdfd] font-['Liberation_Mono','Noto_Sans_CJK_SC',monospace] text-[9.300px] text-[#222]">
        <div className="flex h-[19px] w-[38px] items-center bg-linear-to-b from-[#606060] to-[#484848] pl-[3px]">
          <span className="h-[13px] w-[3px] border-x border-dotted border-[#999]" />
          <svg viewBox="0 0 8 8" className="ml-[4px] size-[7px]" stroke="#eee" strokeWidth="1.800">
            <path d="M1 1l6 6M7 1L1 7" />
          </svg>
          <svg viewBox="0 0 12 12" className="ml-[7px] size-[11px]">
            <path d="M3 1l3 2v3l5 3-1 2-5-3-3 0-2-3 2 1 2-2z" fill="#ddd" stroke="#ddd" strokeWidth=".6" />
          </svg>
        </div>
        <svg viewBox="0 0 6 4" className="ml-[16px] h-[3px] w-[5px]">
          <path d="M0 0h6L3 4z" fill="#666" />
        </svg>
        <span className="ml-[4px] w-[23px] font-['Liberation_Mono'] font-bold">LINE</span>
        <span className="ml-[3px] w-[60px] pt-px whitespace-nowrap">指定下一点或</span>
        <span>[</span>
        <span className="bg-[#d8d8d8] pt-px tracking-[0.300px] whitespace-nowrap">放弃(<span className="text-[#3a3ad0]">U</span>)</span>
        <span>]:</span>
        <svg viewBox="0 0 6 4" className="mr-[4px] ml-auto h-[3px] w-[5px]">
          <path d="M0 4h6L3 0z" fill="#333" />
        </svg>
      </div>
    </main>
  );
}

// width of the cell, glyph (or "v" for a dropdown arrow) and an optional divider on the right
const statusCells = [
  ["w-[17px]", "sGrid"], ["w-[17px]", "sSnap"], ["w-[11px]", "v", 1], ["w-[19px]", "sInfer", 1],
  ["w-[17px]", "sDyn", 1], ["w-[17px]", "sOrtho", 1], ["w-[16px]", "sPolar"], ["w-[12px]", "v", 1],
  ["w-[16px]", "sIso"], ["w-[11px]", "v", 1], ["w-[16px]", "sTrack", 1], ["w-[17px]", "sOsnap"],
  ["w-[12px]", "v", 1], ["w-[17px]", "sWeight", 1], ["w-[18px]", "sTrans", 1], ["w-[17px]", "sCycle", 1],
  ["w-[16px]", "s3d"], ["w-[13px]", "v", 1], ["w-[18px]", "sDucs", 1], ["w-[16px]", "sCube"],
  ["w-[11px]", "v", 1], ["w-[16px]", "sGizmo"], ["w-[11px]", "v", 1], ["w-[19px]", "sAnnoB", 1],
  ["w-[16px]", "sAnno"], ["w-[17px]", "sAnnoS"],
];

const statusCellsEnd = [
  ["w-[16px]", "v", 1], ["w-[15px]", "sCalc", 1], ["w-[19px]", "sLock"], ["w-[10px]", "v", 1],
  ["w-[17px]", "sIsolate", 1], ["w-[23px]", "sClean", 1], ["w-[19px]", "sFull"], ["w-[17px]", "sMenu"],
];

function Cell({ cell: [width, name, divider] }) {
  return (
    <span className={clsx("flex h-full shrink-0 items-center justify-center", width, divider && "border-r border-[#6a6a6a]")}>
      {name === "v" ? <Caret big className="h-[4px] w-[5px]" /> : <Icon name={name} className="size-[12px]" />}
    </span>
  );
}

const layoutTab = "flex h-[14px] items-center justify-center [clip-path:polygon(0_0,100%_0,88%_100%,12%_100%)]";

function StatusBar() {
  return (
    <footer className="flex h-[20px] bg-[#3a3a3a] text-[8.700px]">
      <div className="flex w-[224px] pt-px pl-[6px] text-[#aaa]">
        <span className={clsx(layoutTab, "w-[38px] bg-[#777] font-bold text-white")}>模型</span>
        <span className={clsx(layoutTab, "w-[38px] bg-[#555]")}>布局1</span>
        <span className={clsx(layoutTab, "w-[38px] bg-[#555]")}>布局2</span>
        <span className={clsx(layoutTab, "ml-[2px] w-[18px] bg-[#555] text-[11px]")}>+</span>
      </div>
      <div className="flex grow items-center border-t border-[#666] bg-[#535353] whitespace-nowrap text-white">
        <span className="flex h-full w-[129px] shrink-0 items-center border-r border-[#777] pt-[2px] pl-[13px] tracking-[-0.340px]">6298.1735, 2064.9584, 0.0000</span>
        <span className="w-[20px] shrink-0 pt-[2px] pl-[2px] font-medium">模型</span>
        {statusCells.map((c, i) => (
          <Cell key={i} cell={c} />
        ))}
        <span className="w-[40px] shrink-0 pt-[2px] pl-[4px] tracking-[-0.550px]">1:1 / 100%</span>
        <Cell cell={["w-[11px]", "v", 1]} />
        <Cell cell={["w-[19px]", "sGear"]} />
        <Cell cell={["w-[10px]", "v", 1]} />
        <Cell cell={["w-[17px]", "sPlus", 1]} />
        <Cell cell={["w-[20px]", "sUnit"]} />
        <span className="w-[36px] shrink-0 pt-[2px] pl-[2px] font-medium">小数</span>
        {statusCellsEnd.map((c, i) => (
          <Cell key={i} cell={c} />
        ))}
      </div>
    </footer>
  );
}

function Watermark() {
  return (
    <div className="absolute top-[31px] left-[42px] flex h-[38px] items-center font-medium text-white [-webkit-text-stroke:3.500px_#303030] [paint-order:stroke_fill]">
      <span className="w-[32px] -skew-x-12 text-[30px] leading-[36px] font-bold">秒</span>
      <span className="w-[17px] -skew-x-6 pt-px text-center font-['Lato'] text-[31px] leading-[34px] font-bold">d</span>
      <svg viewBox="0 0 18 26" className="mt-[2px] h-[25px] w-[17px]">
        <path d="M7 1l4 5 5-4" fill="none" stroke="#f5d21d" strokeWidth="3" />
        <circle cx="9" cy="17" r="8.600" fill="#1f7df0" />
        <path d="M6.500 12.500l7 4.500-7 4.500z" fill="#fff" />
      </svg>
      <span className="w-[32px] -skew-x-6 pt-px font-['Lato'] text-[29px] leading-[34px] font-bold tracking-[-0.500px]">ng</span>
      <span className="-skew-x-12 text-[29px] leading-[36px] font-bold whitespace-nowrap">视频</span>
    </div>
  );
}

export default function App() {
  return (
    <div className="relative flex h-[595px] w-[1070px] overflow-hidden bg-[#e4f1fa] font-['Open_Sans','Noto_Sans_CJK_SC',sans-serif] text-[8.700px] text-[#dedede]">
      <div className="w-[4px]">
        <div className="h-[17px] bg-[#d9d3d8]" />
      </div>
      <div className="flex w-[1065px] flex-col bg-[#555]">
        <div className="relative pl-[29px]">
          <TitleBar />
          <MenuTabs />
          <div className="absolute top-0 left-px flex h-[28px] w-[27px] items-center border border-[#999] bg-linear-to-b from-[#747474] to-[#5c5c5c] pl-[2px]">
            <svg viewBox="0 0 18 22" className="h-[21px] w-[17px]">
              <path d="M0 21L6 1h5l6 20h-5l-1-5H6l-2 5z" fill="#d8402e" />
              <path d="M7 12l2-6 2 6z" fill="#6a3530" />
              <path d="M0 21L6 1h2L5 18z" fill="#f07258" />
            </svg>
            <Caret className="ml-[2px] h-[2px] w-[4px]" />
          </div>
        </div>
        <Ribbon />
        <FileTabs />
        <Canvas />
        <StatusBar />
      </div>
      <div className="w-px bg-[#3d6a94]" />
      <Watermark />
    </div>
  );
}
